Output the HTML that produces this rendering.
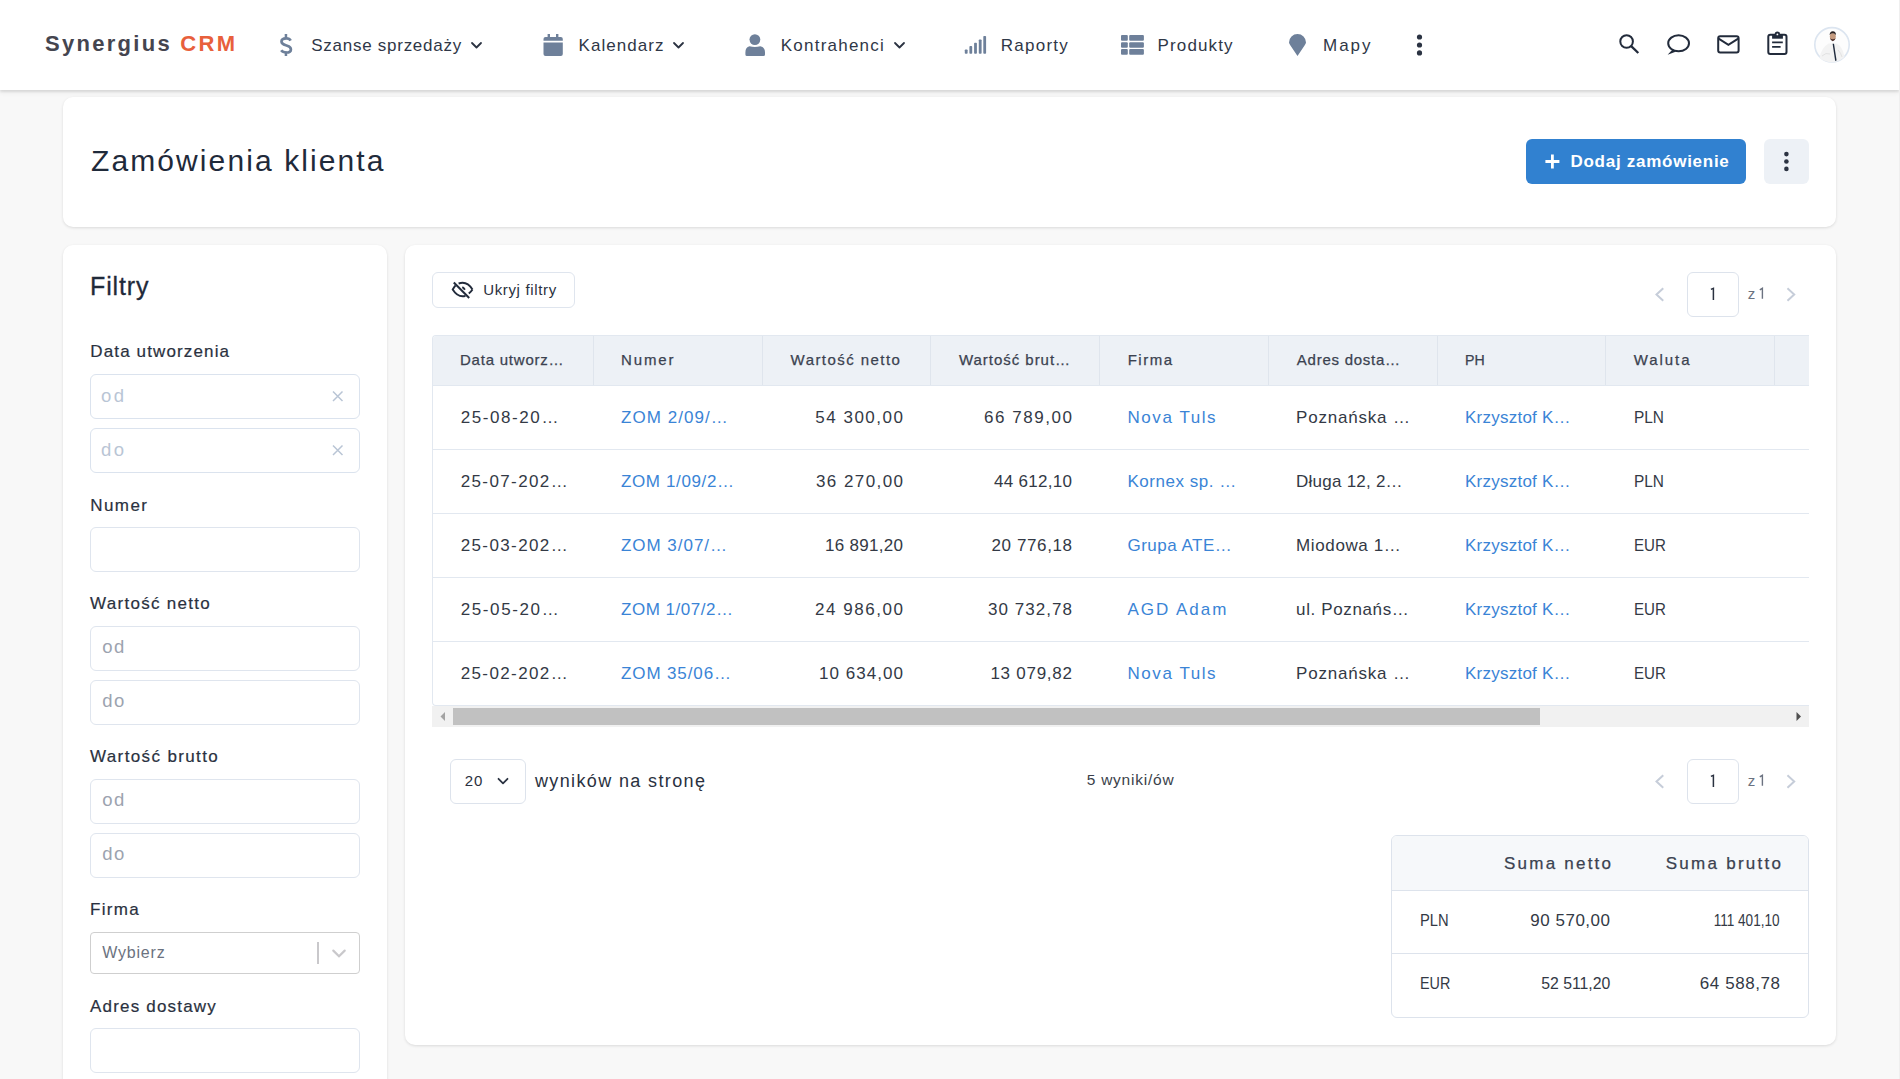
<!DOCTYPE html>
<html><head><meta charset="utf-8">
<style>
*{box-sizing:border-box;margin:0;padding:0}
html,body{width:1900px;height:1079px;overflow:hidden}
body{background:#f8f8f8;font-family:"Liberation Sans",sans-serif;position:relative}
.t{position:absolute;white-space:nowrap;line-height:1;z-index:10}
.b{position:absolute}
#hdr{position:absolute;left:0;top:0;width:1899px;height:90px;background:#fff;box-shadow:0 2px 2px rgba(0,0,0,.09),0 3px 5px rgba(0,0,0,.05);z-index:5}
#rstrip{position:absolute;left:1899px;top:0;width:1px;height:1079px;background:#efefef;z-index:6}
.card{position:absolute;background:#fff;border-radius:10px;box-shadow:0 1px 3px rgba(0,0,0,.12)}
.inp{position:absolute;left:90px;width:270px;height:45px;border:1px solid #dfe5ee;border-radius:6px;background:#fff}
.ic{position:absolute;z-index:10;overflow:visible}
.rl{position:absolute;left:433px;width:1376px;height:1px;background:#e2e8f0}
.cs{position:absolute;top:336px;width:1px;height:49px;background:#dfe5ed}
</style></head>
<body>
<div id="hdr"></div>
<div id="rstrip"></div>

<!-- header icons -->
<svg class="ic" style="left:0;top:0" width="1900" height="90" viewBox="0 0 1900 90">
  <g fill="#6e809a">
    <!-- dollar -->
    <rect x="284.7" y="34" width="2.5" height="4.5"/>
    <rect x="284.7" y="51.5" width="2.5" height="4.5"/>
    <path d="M290.6 40.6 Q289.6 38.3 286.2 38.3 Q281.5 38.3 281.5 41.6 Q281.5 44.2 285.8 45.3 L287.2 45.7 Q290.9 46.7 290.9 49.4 Q290.9 52.5 286.3 52.5 Q282.8 52.5 281.2 50.3" fill="none" stroke="#6e809a" stroke-width="2.7"/>
    <!-- calendar -->
    <rect x="547.6" y="34" width="2.4" height="4"/>
    <rect x="556" y="34" width="2.4" height="4"/>
    <path d="M545.5 37.1 H560.8 Q562.8 37.1 562.8 39.1 V40.8 H543.5 V39.1 Q543.5 37.1 545.5 37.1Z"/>
    <path d="M543.5 42.4 H562.8 V53.9 Q562.8 55.9 560.8 55.9 H545.5 Q543.5 55.9 543.5 53.9Z"/>
    <!-- person -->
    <circle cx="754.9" cy="39.6" r="5.4"/>
    <path d="M749.5 46.3 Q754.9 47.6 760.3 46.3 Q765 47.2 765 52.5 V54.4 Q765 55.9 763.5 55.9 H746.9 Q745.4 55.9 745.4 54.4 V52.5 Q745.4 47.2 749.5 46.3Z"/>
    <!-- signal -->
    <rect x="964.8" y="49.5" width="2.8" height="4.2" rx="0.8"/>
    <rect x="969.4" y="46.1" width="2.8" height="7.6" rx="0.8"/>
    <rect x="974.1" y="42.8" width="2.8" height="10.9" rx="0.8"/>
    <rect x="978.8" y="39.5" width="2.8" height="14.2" rx="0.8"/>
    <rect x="983.3" y="36" width="2.8" height="17.7" rx="0.8"/>
    <!-- table -->
    <rect x="1121" y="35.1" width="6.8" height="5.7" rx="1"/>
    <rect x="1129.2" y="35.1" width="14.7" height="5.7" rx="1"/>
    <rect x="1121" y="42.2" width="6.8" height="5.5" rx="1"/>
    <rect x="1129.2" y="42.2" width="14.7" height="5.5" rx="1"/>
    <rect x="1121" y="49.1" width="6.8" height="5.7" rx="1"/>
    <rect x="1129.2" y="49.1" width="14.7" height="5.7" rx="1"/>
    <!-- pin -->
    <path d="M1297.5 55.9 L1290.6 45.8 Q1289 43.6 1289 42.5 A8.5 8.5 0 0 1 1306 42.5 Q1306 43.6 1304.4 45.8Z"/>
  </g>
  <g fill="#2b3342">
    <circle cx="1419.5" cy="37" r="2.6"/>
    <circle cx="1419.5" cy="45" r="2.6"/>
    <circle cx="1419.5" cy="52.9" r="2.6"/>
  </g>
  <!-- chevrons -->
  <g fill="none" stroke="#2b3342" stroke-width="1.8" stroke-linecap="round" stroke-linejoin="round">
    <path d="M472 43 L476.5 47.5 L481 43"/>
    <path d="M674 43 L678.5 47.5 L683 43"/>
    <path d="M895 43 L899.5 47.5 L904 43"/>
  </g>
  <!-- right icons -->
  <g fill="none" stroke="#222b3b" stroke-width="2">
    <circle cx="1626.6" cy="41.5" r="6.3"/>
    <path d="M1631.2 46.2 L1638.3 53" stroke-width="2.3"/>
    <ellipse cx="1678.6" cy="43.3" rx="10.4" ry="8"/>
    <rect x="1718.2" y="36.2" width="20.4" height="16.2" rx="2"/>
    <path d="M1718.6 38.6 L1728.4 44.8 L1738.2 38.6"/>
    <rect x="1768.3" y="34.7" width="18.2" height="19.2" rx="2"/>
    <path d="M1772.1 42.3 H1782.8 M1772.1 46.8 H1780.6" stroke-width="1.8"/>
  </g>
  <path d="M1672.6 49.6 L1667.6 54.8 L1675.6 51.8Z" fill="#222b3b"/>
  <rect x="1772.1" y="34.2" width="10.8" height="4.5" fill="#222b3b"/>
  <circle cx="1777.4" cy="34.2" r="2.7" fill="#222b3b"/>
  <circle cx="1777.4" cy="34.4" r="0.9" fill="#fff"/>
  <!-- avatar -->
  <circle cx="1832" cy="44.8" r="17.2" fill="#fdfdfd" stroke="#dce5f0" stroke-width="1.6"/>
  <path d="M1819.5 58 Q1821 48 1828.5 43.5 L1836.5 43.5 Q1843 46.5 1844.5 57 Q1839 62 1832 62.3 Q1824.5 62 1819.5 58Z" fill="#f3f3f3"/>
  <path d="M1822 56 Q1826 52 1830 54 M1838 50 Q1841 53 1842 57" fill="none" stroke="#e2e2e2" stroke-width="1"/>
  <ellipse cx="1832.8" cy="36.6" rx="3" ry="3.6" fill="#c49a7e"/>
  <path d="M1829.6 35 Q1829.8 31.5 1832.8 31.3 Q1836 31.5 1836 35 Q1834.5 33 1832.8 33.2 Q1831 33 1829.6 35Z" fill="#2a2222"/>
  <path d="M1830 38 Q1830.6 40.8 1832.8 41.3 Q1835 40.8 1835.6 38 Q1834.5 39.2 1832.8 39.3 Q1831 39.2 1830 38Z" fill="#4d2f2b"/>
  <path d="M1832.6 43.8 L1834 43.8 L1836.6 60.5 L1835.2 61Z" fill="#1f2a3c"/>
</svg>

<!-- cards -->
<div class="card" style="left:63px;top:97px;width:1773px;height:130px"></div>
<div class="card" style="left:63px;top:245px;width:324px;height:900px"></div>
<div class="card" style="left:405px;top:245px;width:1431px;height:800px"></div>

<!-- title buttons -->
<div class="b" style="left:1526px;top:139px;width:220px;height:45px;background:#3181d0;border-radius:6px"></div>
<svg class="ic" style="left:1540px;top:150px" width="24" height="24" viewBox="0 0 24 24">
  <path d="M12.4 4.5 V18.5 M5.4 11.5 H19.4" stroke="#fff" stroke-width="2.8"/>
</svg>
<div class="b" style="left:1764px;top:139px;width:45px;height:45px;background:#edf1f6;border-radius:6px"></div>
<svg class="ic" style="left:1764px;top:139px" width="45" height="45" viewBox="0 0 45 45">
  <g fill="#2b3342"><circle cx="22.4" cy="15.1" r="2.3"/><circle cx="22.4" cy="22.5" r="2.3"/><circle cx="22.4" cy="29.9" r="2.3"/></g>
</svg>

<!-- filter inputs -->
<div class="inp" style="top:374px;border-color:#dbe3ee"></div>
<div class="inp" style="top:428px;border-color:#dbe3ee"></div>
<svg class="ic" style="left:325px;top:383px" width="26" height="80" viewBox="0 0 26 80">
  <path d="M8 8.5 L17.5 18 M17.5 8.5 L8 18 M8 62.5 L17.5 72 M17.5 62.5 L8 72" stroke="#b9c5d5" stroke-width="1.5"/>
</svg>
<div class="inp" style="top:527px"></div>
<div class="inp" style="top:626px"></div>
<div class="inp" style="top:680px"></div>
<div class="inp" style="top:779px"></div>
<div class="inp" style="top:833px"></div>
<div class="inp" style="top:932px;height:41.5px;border-color:#cfcfcf;border-radius:4px"></div>
<div class="b" style="left:317px;top:942px;width:2px;height:22px;background:#c9c8cb"></div>
<svg class="ic" style="left:325px;top:940px" width="26" height="26" viewBox="0 0 26 26">
  <path d="M8.3 10.6 L14 16.2 L19.7 10.6" fill="none" stroke="#c9c8cb" stroke-width="2.2" stroke-linecap="round"/>
</svg>
<div class="inp" style="top:1028px"></div>

<!-- ukryj filtry -->
<div class="b" style="left:432px;top:272px;width:143px;height:36px;border:1px solid #dfe5ee;border-radius:6px;background:#fff"></div>
<svg class="ic" style="left:448px;top:278px" width="30" height="26" viewBox="448 278 30 26">
  <g fill="none" stroke="#222b3b" stroke-width="1.9">
    <path d="M458.6 283.5 C460 283 461.2 282.7 462.6 282.7 C466.2 282.7 469.7 285 472.5 289.5"/>
    <path d="M472.5 289.5 C471.4 291.2 470.1 292.5 468.8 293.6"/>
    <path d="M455.6 285.4 C454.5 286.6 453.6 288 452.7 289.5 C455.5 294 459 296.3 462.6 296.3 C463.6 296.3 464.6 296.1 465.5 295.8"/>
    <path d="M453.8 282.5 L469.2 298" stroke-width="2"/>
    <path d="M462.3 287.1 C463.4 287.7 464.3 288.6 464.9 289.7" stroke-width="1.8"/>
  </g>
</svg>

<!-- pagination top/bottom -->
<div class="b" style="left:1687px;top:272px;width:52px;height:45px;border:1px solid #dde3ec;border-radius:6px"></div>
<div class="b" style="left:1687px;top:759px;width:52px;height:45px;border:1px solid #dde3ec;border-radius:6px"></div>
<svg class="ic" style="left:1640px;top:270px" width="170" height="540" viewBox="0 0 170 540">
  <g fill="none" stroke="#c6cdd9" stroke-width="2" stroke-linecap="square">
    <path d="M22.5 19 L16.5 24.5 L22.5 30"/>
    <path d="M148.2 19 L154.2 24.5 L148.2 30"/>
    <path d="M22.5 506 L16.5 511.5 L22.5 517"/>
    <path d="M148.2 506 L154.2 511.5 L148.2 517"/>
  </g>
</svg>

<svg class="ic" style="left:1700px;top:280px" width="70" height="520" viewBox="0 0 70 520">
  <path d="M10.9 9.4 L13.4 8.3 V20" fill="none" stroke="#2a3140" stroke-width="1.5"/>
  <path d="M10.9 496.4 L13.4 495.3 V507" fill="none" stroke="#2a3140" stroke-width="1.5"/>
  <path d="M59.8 9.9 L62.4 8.3 V18.7" fill="none" stroke="#6b7280" stroke-width="1.4"/>
  <path d="M59.8 496.9 L62.4 495.3 V505.7" fill="none" stroke="#6b7280" stroke-width="1.4"/>
</svg>
<!-- table -->
<div class="b" style="left:432px;top:335px;width:1377px;height:371px;border:1px solid #e2e8f0;border-right:none;border-radius:4px 0 0 4px;background:#fff"></div>
<div class="b" style="left:433px;top:336px;width:1376px;height:49px;background:#edf1f6;border-radius:3px 0 0 0"></div>
<div class="rl" style="top:385px"></div>
<div class="rl" style="top:449px"></div>
<div class="rl" style="top:513px"></div>
<div class="rl" style="top:577px"></div>
<div class="rl" style="top:641px"></div>
<div class="cs" style="left:593px"></div>
<div class="cs" style="left:762px"></div>
<div class="cs" style="left:930px"></div>
<div class="cs" style="left:1099px"></div>
<div class="cs" style="left:1268px"></div>
<div class="cs" style="left:1437px"></div>
<div class="cs" style="left:1605px"></div>
<div class="cs" style="left:1774px"></div>
<!-- scrollbar -->
<div class="b" style="left:432px;top:706px;width:1377px;height:21px;background:#f1f1f1"></div>
<div class="b" style="left:453px;top:708px;width:1087px;height:17px;background:#c1c1c1"></div>
<svg class="ic" style="left:432px;top:706px" width="1377" height="21" viewBox="0 0 1377 21">
  <path d="M8.5 10.5 L13 6 V15Z" fill="#a3a3a3"/>
  <path d="M1369 10.5 L1364.5 6 V15Z" fill="#505050"/>
</svg>

<!-- per page select -->
<div class="b" style="left:450px;top:759px;width:76px;height:45px;border:1px solid #dde3ec;border-radius:6px"></div>
<svg class="ic" style="left:490px;top:770px" width="26" height="22" viewBox="0 0 26 22">
  <path d="M8.5 8.8 L13 13.3 L17.5 8.8" fill="none" stroke="#2b3342" stroke-width="1.8" stroke-linecap="round" stroke-linejoin="round"/>
</svg>

<!-- summary -->
<div class="b" style="left:1391px;top:835px;width:418px;height:183px;border:1px solid #dde3ec;border-radius:6px;background:#fff;overflow:hidden">
  <div class="b" style="left:0;top:0;width:418px;height:55px;background:#f6f8fa;border-bottom:1px solid #dde3ec"></div>
  <div class="b" style="left:0;top:117px;width:418px;height:1px;background:#dde3ec"></div>
</div>

<div class="t" id="logo1" style="top:33.38px;font-size:22px;color:#45454f;font-weight:bold;letter-spacing:2.284px;left:45.00px;">Synergius <span style="color:#e8603c">CRM</span></div>
<div class="t" id="nav1" style="top:37.11px;font-size:17px;color:#2f3747;letter-spacing:0.740px;left:311.20px;">Szanse sprzedaży</div>
<div class="t" id="nav2" style="top:37.11px;font-size:17px;color:#2f3747;letter-spacing:1.055px;left:578.60px;">Kalendarz</div>
<div class="t" id="nav3" style="top:37.11px;font-size:17px;color:#2f3747;letter-spacing:1.227px;left:780.80px;">Kontrahenci</div>
<div class="t" id="nav4" style="top:37.11px;font-size:17px;color:#2f3747;letter-spacing:1.245px;left:1000.80px;">Raporty</div>
<div class="t" id="nav5" style="top:37.11px;font-size:17px;color:#2f3747;letter-spacing:1.129px;left:1157.60px;">Produkty</div>
<div class="t" id="nav6" style="top:37.11px;font-size:17px;color:#2f3747;letter-spacing:1.974px;left:1323.00px;">Mapy</div>
<div class="t" id="title" style="top:145.60px;font-size:30px;color:#1f2a3a;letter-spacing:2.100px;left:91.00px;">Zamówienia klienta</div>
<div class="t" id="addbtn" style="top:152.91px;font-size:17px;color:#ffffff;font-weight:bold;letter-spacing:0.728px;left:1570.50px;">Dodaj zamówienie</div>
<div class="t" id="filtry" style="top:273.94px;font-size:25px;color:#1f2a3a;letter-spacing:0.869px;left:90.00px;-webkit-text-stroke:0.3px currentColor;">Filtry</div>
<div class="t" id="l1" style="top:343.41px;font-size:17px;color:#2a3140;letter-spacing:1.133px;left:90.30px;-webkit-text-stroke:0.2px currentColor;">Data utworzenia</div>
<div class="t" id="l2" style="top:496.61px;font-size:17px;color:#2a3140;letter-spacing:1.421px;left:90.30px;-webkit-text-stroke:0.2px currentColor;">Numer</div>
<div class="t" id="l3" style="top:595.31px;font-size:17px;color:#2a3140;letter-spacing:1.296px;left:90.00px;-webkit-text-stroke:0.2px currentColor;">Wartość netto</div>
<div class="t" id="l4" style="top:748.31px;font-size:17px;color:#2a3140;letter-spacing:1.369px;left:90.00px;-webkit-text-stroke:0.2px currentColor;">Wartość brutto</div>
<div class="t" id="l5" style="top:901.31px;font-size:17px;color:#2a3140;letter-spacing:1.287px;left:90.00px;-webkit-text-stroke:0.2px currentColor;">Firma</div>
<div class="t" id="l6" style="top:997.61px;font-size:17px;color:#2a3140;letter-spacing:1.192px;left:90.00px;-webkit-text-stroke:0.2px currentColor;">Adres dostawy</div>
<div class="t" id="p1" style="top:386.64px;font-size:18.5px;color:#b9c5d5;letter-spacing:2.522px;left:101.00px;">od</div>
<div class="t" id="p2" style="top:440.64px;font-size:18.5px;color:#b9c5d5;letter-spacing:2.522px;left:101.00px;">do</div>
<div class="t" id="p3" style="top:638.34px;font-size:18.5px;color:#9ca3af;letter-spacing:1.422px;left:102.20px;">od</div>
<div class="t" id="p4" style="top:692.34px;font-size:18.5px;color:#9ca3af;letter-spacing:1.422px;left:102.20px;">do</div>
<div class="t" id="p5" style="top:791.34px;font-size:18.5px;color:#9ca3af;letter-spacing:1.422px;left:102.20px;">od</div>
<div class="t" id="p6" style="top:845.34px;font-size:18.5px;color:#9ca3af;letter-spacing:1.422px;left:102.20px;">do</div>
<div class="t" id="wyb" style="top:944.66px;font-size:16px;color:#6b7280;letter-spacing:0.810px;left:102.20px;">Wybierz</div>
<div class="t" id="ukryj" style="top:282.00px;font-size:15px;color:#2a3140;letter-spacing:0.652px;left:483.20px;">Ukryj filtry</div>
<div class="t" id="z1" style="top:286.00px;font-size:15px;color:#6b7280;left:1747.80px;">z</div>
<div class="t" id="z2" style="top:773.00px;font-size:15px;color:#6b7280;left:1747.80px;">z</div>
<div class="t" id="h1" style="top:351.60px;font-size:15px;color:#3b4250;letter-spacing:0.778px;left:460.00px;-webkit-text-stroke:0.25px currentColor;">Data utworz…</div>
<div class="t" id="h2" style="top:351.60px;font-size:15px;color:#3b4250;letter-spacing:1.871px;left:621.00px;-webkit-text-stroke:0.25px currentColor;">Numer</div>
<div class="t" id="h3" style="top:351.60px;font-size:15px;color:#3b4250;letter-spacing:1.443px;left:790.60px;-webkit-text-stroke:0.25px currentColor;">Wartość netto</div>
<div class="t" id="h4" style="top:351.60px;font-size:15px;color:#3b4250;letter-spacing:0.978px;left:958.90px;-webkit-text-stroke:0.25px currentColor;">Wartość brut…</div>
<div class="t" id="h5" style="top:351.60px;font-size:15px;color:#3b4250;letter-spacing:1.493px;left:1127.70px;-webkit-text-stroke:0.25px currentColor;">Firma</div>
<div class="t" id="h6" style="top:351.60px;font-size:15px;color:#3b4250;letter-spacing:0.750px;left:1296.80px;-webkit-text-stroke:0.25px currentColor;">Adres dosta…</div>
<div class="t" id="h7" style="top:351.60px;font-size:15px;color:#3b4250;transform:scaleX(0.9424);transform-origin:left center;left:1465.40px;-webkit-text-stroke:0.25px currentColor;">PH</div>
<div class="t" id="h8" style="top:351.60px;font-size:15px;color:#3b4250;letter-spacing:1.912px;left:1633.80px;-webkit-text-stroke:0.25px currentColor;">Waluta</div>
<div class="t" id="r0c1" style="top:408.81px;font-size:17px;color:#333945;letter-spacing:1.580px;left:460.70px;">25-08-20…</div>
<div class="t" id="r0c2" style="top:408.81px;font-size:17px;color:#3a84d6;letter-spacing:1.054px;left:621.00px;">ZOM 2/09/…</div>
<div class="t" id="r0c3" style="top:408.81px;font-size:17px;color:#333945;letter-spacing:1.520px;right:995.48px;">54 300,00</div>
<div class="t" id="r0c4" style="top:408.81px;font-size:17px;color:#333945;letter-spacing:1.557px;right:826.44px;">66 789,00</div>
<div class="t" id="r0c5" style="top:408.81px;font-size:17px;color:#3a84d6;letter-spacing:1.563px;left:1127.50px;">Nova Tuls</div>
<div class="t" id="r0c6" style="top:408.81px;font-size:17px;color:#333945;letter-spacing:0.796px;left:1296.10px;">Poznańska …</div>
<div class="t" id="r0c7" style="top:408.81px;font-size:17px;color:#3a84d6;letter-spacing:0.239px;left:1465.00px;">Krzysztof K…</div>
<div class="t" id="r0c8" style="top:408.81px;font-size:17px;color:#333945;transform:scaleX(0.9072);transform-origin:left center;left:1634.20px;">PLN</div>
<div class="t" id="r1c1" style="top:472.81px;font-size:17px;color:#333945;letter-spacing:1.387px;left:460.70px;">25-07-202…</div>
<div class="t" id="r1c2" style="top:472.81px;font-size:17px;color:#3a84d6;letter-spacing:0.623px;left:621.00px;">ZOM 1/09/2…</div>
<div class="t" id="r1c3" style="top:472.81px;font-size:17px;color:#333945;letter-spacing:1.420px;right:995.58px;">36 270,00</div>
<div class="t" id="r1c4" style="top:472.81px;font-size:17px;color:#333945;letter-spacing:0.295px;right:827.71px;">44 612,10</div>
<div class="t" id="r1c5" style="top:472.81px;font-size:17px;color:#3a84d6;letter-spacing:0.518px;left:1127.50px;">Kornex sp. …</div>
<div class="t" id="r1c6" style="top:472.81px;font-size:17px;color:#333945;letter-spacing:0.232px;left:1296.10px;">Długa 12, 2…</div>
<div class="t" id="r1c7" style="top:472.81px;font-size:17px;color:#3a84d6;letter-spacing:0.239px;left:1465.00px;">Krzysztof K…</div>
<div class="t" id="r1c8" style="top:472.81px;font-size:17px;color:#333945;transform:scaleX(0.9072);transform-origin:left center;left:1634.20px;">PLN</div>
<div class="t" id="r2c1" style="top:536.81px;font-size:17px;color:#333945;letter-spacing:1.387px;left:460.70px;">25-03-202…</div>
<div class="t" id="r2c2" style="top:536.81px;font-size:17px;color:#3a84d6;letter-spacing:0.965px;left:621.00px;">ZOM 3/07/…</div>
<div class="t" id="r2c3" style="top:536.81px;font-size:17px;color:#333945;letter-spacing:0.295px;right:996.71px;">16 891,20</div>
<div class="t" id="r2c4" style="top:536.81px;font-size:17px;color:#333945;letter-spacing:0.607px;right:827.39px;">20 776,18</div>
<div class="t" id="r2c5" style="top:536.81px;font-size:17px;color:#3a84d6;letter-spacing:0.495px;left:1127.50px;">Grupa ATE…</div>
<div class="t" id="r2c6" style="top:536.81px;font-size:17px;color:#333945;letter-spacing:0.609px;left:1296.10px;">Miodowa 1…</div>
<div class="t" id="r2c7" style="top:536.81px;font-size:17px;color:#3a84d6;letter-spacing:0.239px;left:1465.00px;">Krzysztof K…</div>
<div class="t" id="r2c8" style="top:536.81px;font-size:17px;color:#333945;transform:scaleX(0.8881);transform-origin:left center;left:1634.20px;">EUR</div>
<div class="t" id="r3c1" style="top:600.81px;font-size:17px;color:#333945;letter-spacing:1.617px;left:460.70px;">25-05-20…</div>
<div class="t" id="r3c2" style="top:600.81px;font-size:17px;color:#3a84d6;letter-spacing:0.523px;left:621.00px;">ZOM 1/07/2…</div>
<div class="t" id="r3c3" style="top:600.81px;font-size:17px;color:#333945;letter-spacing:1.545px;right:995.46px;">24 986,00</div>
<div class="t" id="r3c4" style="top:600.81px;font-size:17px;color:#333945;letter-spacing:1.045px;right:826.96px;">30 732,78</div>
<div class="t" id="r3c5" style="top:600.81px;font-size:17px;color:#3a84d6;letter-spacing:1.979px;left:1127.50px;">AGD Adam</div>
<div class="t" id="r3c6" style="top:600.81px;font-size:17px;color:#333945;letter-spacing:0.623px;left:1296.10px;">ul. Poznańs…</div>
<div class="t" id="r3c7" style="top:600.81px;font-size:17px;color:#3a84d6;letter-spacing:0.239px;left:1465.00px;">Krzysztof K…</div>
<div class="t" id="r3c8" style="top:600.81px;font-size:17px;color:#333945;transform:scaleX(0.8881);transform-origin:left center;left:1634.20px;">EUR</div>
<div class="t" id="r4c1" style="top:664.81px;font-size:17px;color:#333945;letter-spacing:1.387px;left:460.70px;">25-02-202…</div>
<div class="t" id="r4c2" style="top:664.81px;font-size:17px;color:#3a84d6;letter-spacing:0.884px;left:621.00px;">ZOM 35/06…</div>
<div class="t" id="r4c3" style="top:664.81px;font-size:17px;color:#333945;letter-spacing:1.045px;right:995.96px;">10 634,00</div>
<div class="t" id="r4c4" style="top:664.81px;font-size:17px;color:#333945;letter-spacing:0.745px;right:827.26px;">13 079,82</div>
<div class="t" id="r4c5" style="top:664.81px;font-size:17px;color:#3a84d6;letter-spacing:1.563px;left:1127.50px;">Nova Tuls</div>
<div class="t" id="r4c6" style="top:664.81px;font-size:17px;color:#333945;letter-spacing:0.796px;left:1296.10px;">Poznańska …</div>
<div class="t" id="r4c7" style="top:664.81px;font-size:17px;color:#3a84d6;letter-spacing:0.239px;left:1465.00px;">Krzysztof K…</div>
<div class="t" id="r4c8" style="top:664.81px;font-size:17px;color:#333945;transform:scaleX(0.8881);transform-origin:left center;left:1634.20px;">EUR</div>
<div class="t" id="sel20" style="top:773.30px;font-size:15px;color:#2a3140;letter-spacing:0.913px;left:464.70px;">20</div>
<div class="t" id="wyn" style="top:771.56px;font-size:18px;color:#2a3140;letter-spacing:1.370px;left:535.00px;">wyników na stronę</div>
<div class="t" id="cnt" style="top:772.48px;font-size:15.5px;color:#3a3f4a;letter-spacing:0.765px;left:1086.70px;">5 wyniki/ów</div>
<div class="t" id="sn" style="top:855.21px;font-size:17px;color:#3b4250;letter-spacing:2.227px;left:1504.00px;-webkit-text-stroke:0.25px currentColor;">Suma netto</div>
<div class="t" id="sb" style="top:855.21px;font-size:17px;color:#3b4250;letter-spacing:2.269px;left:1665.70px;-webkit-text-stroke:0.25px currentColor;">Suma brutto</div>
<div class="t" id="s1" style="top:912.11px;font-size:17px;color:#333945;transform:scaleX(0.8666);transform-origin:left center;left:1419.50px;">PLN</div>
<div class="t" id="s2" style="top:912.11px;font-size:17px;color:#333945;letter-spacing:0.507px;right:289.49px;">90 570,00</div>
<div class="t" id="s3" style="top:912.11px;font-size:17px;color:#333945;transform:scaleX(0.7982);transform-origin:right center;right:120.00px;">111 401,10</div>
<div class="t" id="s4" style="top:975.11px;font-size:17px;color:#333945;transform:scaleX(0.8451);transform-origin:left center;left:1419.50px;">EUR</div>
<div class="t" id="s5" style="top:975.11px;font-size:17px;color:#333945;transform:scaleX(0.9308);transform-origin:right center;right:290.00px;">52 511,20</div>
<div class="t" id="s6" style="top:975.11px;font-size:17px;color:#333945;letter-spacing:0.570px;right:119.43px;">64 588,78</div>
</body></html>
